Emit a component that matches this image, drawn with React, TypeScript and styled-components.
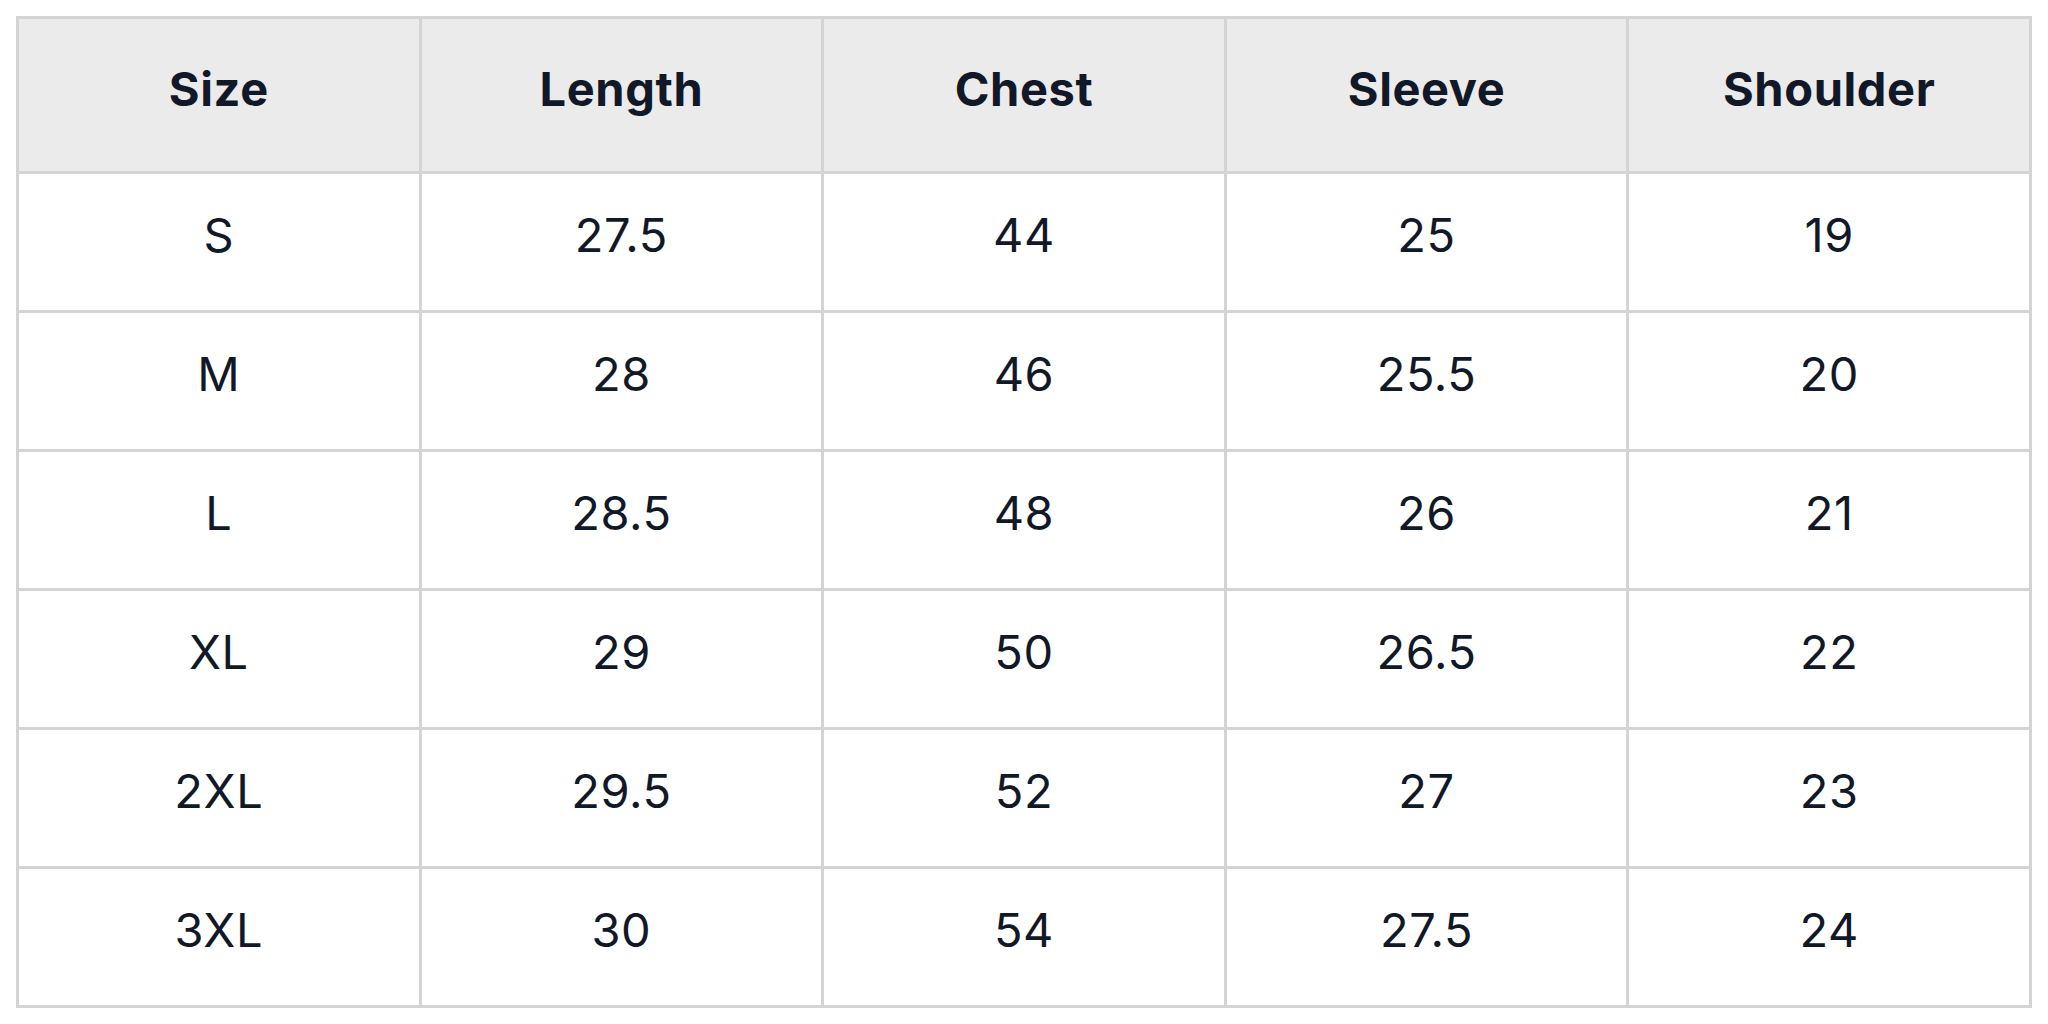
import styled, { createGlobalStyle } from "styled-components";

const GlobalStyle = createGlobalStyle`
    html, body {
        margin:0;
        padding:0;
        background-color:#ffffff;
        font-family:Inter, "Noto Sans", sans-serif;
    }
`

const Page = styled.div`
    width:100%;
    padding:16px;
    box-sizing:border-box;
`

const Table = styled.table`
    width:100%;
    table-layout:fixed;
    border-collapse:collapse;
    border:3px solid #d4d4d4;
    color:#111827;
    font-size:47px;
    letter-spacing:0.6px;
`

const HeadCell = styled.th`
    height:155px;
    padding:0 0 14px 0;
    border:3px solid #d4d4d4;
    background-color:#ebebeb;
    font-weight:700;
    text-align:center;
    vertical-align:middle;
    box-sizing:border-box;
`

const Cell = styled.td`
    height:139px;
    padding:0 0 15px 0;
    border:3px solid #d4d4d4;
    font-weight:400;
    text-align:center;
    vertical-align:middle;
    box-sizing:border-box;
`

const columns = ["Size", "Length", "Chest", "Sleeve", "Shoulder"];

const rows: string[][] = [
    ["S", "27.5", "44", "25", "19"],
    ["M", "28", "46", "25.5", "20"],
    ["L", "28.5", "48", "26", "21"],
    ["XL", "29", "50", "26.5", "22"],
    ["2XL", "29.5", "52", "27", "23"],
    ["3XL", "30", "54", "27.5", "24"],
];

export default function App() {
    return <>
        <GlobalStyle/>
        <Page>
            <Table>
                <thead>
                    <tr>
                        {columns.map(c => (
                            <HeadCell key={c}>{c}</HeadCell>
                        ))}
                    </tr>
                </thead>
                <tbody>
                    {rows.map((r, i) => (
                        <tr key={i}>
                            {r.map((v, j) => (
                                <Cell key={j}>{v}</Cell>
                            ))}
                        </tr>
                    ))}
                </tbody>
            </Table>
        </Page>
    </>
}
